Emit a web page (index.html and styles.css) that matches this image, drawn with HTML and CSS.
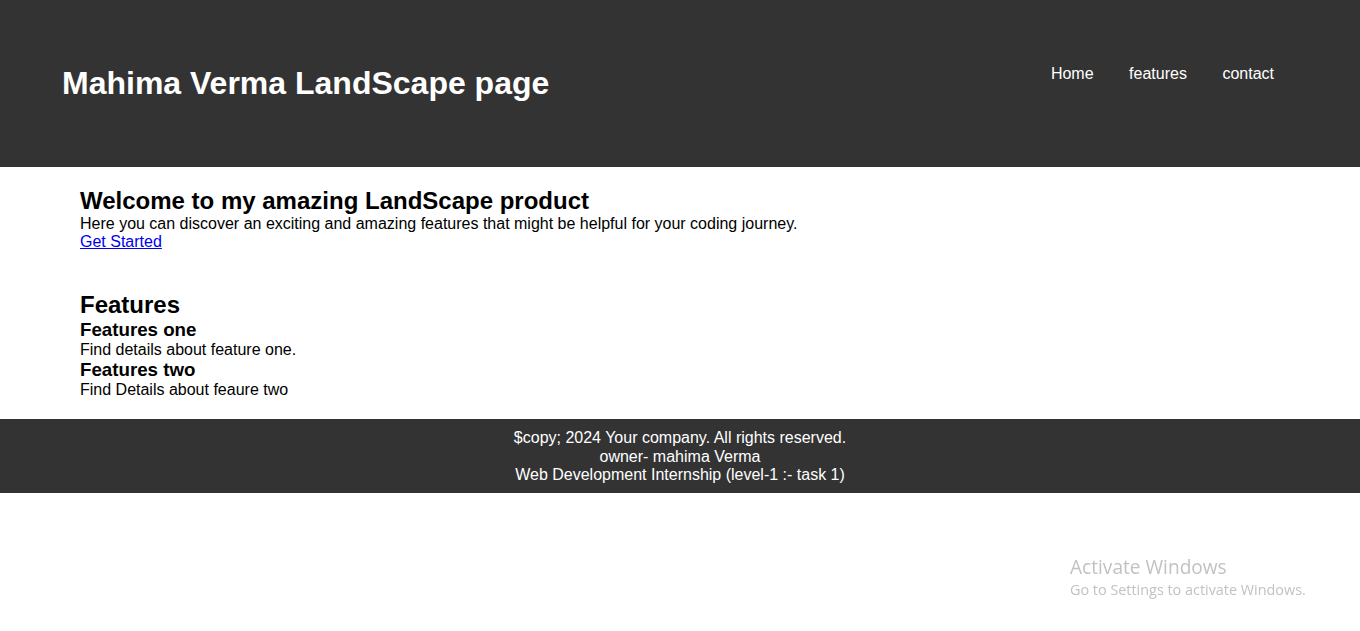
FILE: index.html
```html
<!DOCTYPE html>
<html lang="en">
<head>
<meta charset="utf-8">
<title>Mahima Verma LandScape page</title>
<link rel="stylesheet" href="styles.css">
</head>
<body>
<header class="site-header">
  <h1 class="site-title">Mahima Verma LandScape page</h1>
  <nav class="site-nav">
    <ul class="nav-list">
      <li><a href="#">Home</a></li>
      <li><a href="#">features</a></li>
      <li><a href="#">contact</a></li>
    </ul>
  </nav>
</header>
<main>
  <section class="hero">
    <h2>Welcome to my amazing LandScape product</h2>
    <p>Here you can discover an exciting and amazing features that might be helpful for your coding journey.</p>
    <a href="#" class="cta">Get Started</a>
  </section>
  <section class="features">
    <h2>Features</h2>
    <div class="feature">
      <h3>Features one</h3>
      <p>Find details about feature one.</p>
    </div>
    <div class="feature">
      <h3>Features two</h3>
      <p>Find Details about feaure two</p>
    </div>
  </section>
</main>
<footer class="site-footer">
  <p>$copy; 2024 Your company. All rights reserved.</p>
  <p>owner- mahima Verma</p>
  <p>Web Development Internship (level-1 :- task 1)</p>
</footer>
<div class="watermark">
  <div class="wm-title">Activate Windows</div>
  <div class="wm-sub">Go to Settings to activate Windows.</div>
</div>
</body>
</html>
```

FILE: styles.css
```css
html, body {
  margin: 0;
  padding: 0;
  background: #ffffff;
}

body {
  font-family: "Liberation Sans", Arial, sans-serif;
  font-size: 16px;
  line-height: 1.15;
  color: #000000;
}

.site-header {
  display: flex;
  justify-content: space-between;
  align-items: center;
  box-sizing: border-box;
  height: 167px;
  padding: 0 60px 0 62px;
  background: #333333;
  color: #ffffff;
}

.site-title {
  margin: 0;
  font-size: 32px;
  font-weight: bold;
}

.site-nav {
  align-self: flex-start;
  padding-top: 65px;
  margin-right: 26px;
}

.nav-list {
  display: flex;
  gap: 35.5px;
  list-style: none;
  margin: 0;
  padding: 0;
}

.nav-list a {
  color: #ffffff;
  text-decoration: none;
}

.hero,
.features {
  padding: 20px 80px;
}

.features {
  padding-bottom: 19.5px;
}

h2 {
  margin: 0;
  font-size: 24px;
  font-weight: bold;
}

h3 {
  margin: 0;
  font-size: 18.72px;
  line-height: 22px;
  font-weight: bold;
}

p {
  margin: 0;
}

.cta {
  color: #0000ee;
  text-decoration: underline;
}

.site-footer {
  padding: 10px 0 9px;
  background: #333333;
  color: #ffffff;
  text-align: center;
}

.watermark {
  position: fixed;
  left: 1070px;
  top: 555px;
  font-family: "Open Sans", "Noto Sans", sans-serif;
  color: #c2c2c2;
  pointer-events: none;
}

.wm-title {
  font-size: 19.1px;
  line-height: 25px;
}

.wm-sub {
  font-size: 14.4px;
  line-height: 20px;
}
```
